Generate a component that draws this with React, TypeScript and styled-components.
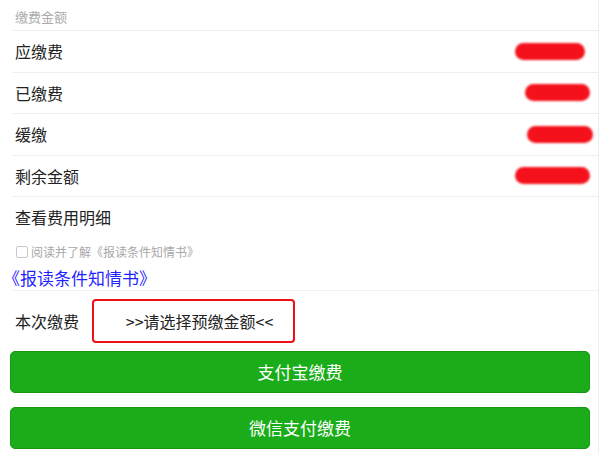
import styled, { createGlobalStyle } from "styled-components";

const GlobalStyle = createGlobalStyle`
  body {
    margin: 0;
    background: #ffffff;
    font-family: "Noto Sans CJK SC", "Liberation Sans", sans-serif;
  }
`;

const Page = styled.div`
  width: 598px;
  height: 453px;
  border-right: 1px solid #ececec;
  background: #ffffff;
  overflow: hidden;
`;

const SectionTitle = styled.div`
  height: 30px;
  padding: 8px 0 0 15px;
  box-sizing: border-box;
  font-size: 13px;
  line-height: 18px;
  color: #aaaaaa;
`;

const Cell = styled.div`
  margin-left: 12px;
  padding-left: 3px;
  padding-right: 8px;
  height: 41.5px;
  box-sizing: border-box;
  border-top: 1px solid #eeeeee;
  display: flex;
  align-items: center;
  justify-content: space-between;
  font-size: 16px;
  color: #222222;
`;

const Redacted = styled.span<{ $w: number; $shift: number }>`
  display: inline-block;
  width: ${(p) => p.$w}px;
  height: 17px;
  margin-right: ${(p) => p.$shift}px;
  background: #f5111b;
  border-radius: 9px;
  filter: blur(0.8px);
`;

const AgreeRow = styled.label`
  display: flex;
  align-items: center;
  gap: 3px;
  height: 28px;
  padding-left: 16px;
  font-size: 12px;
  color: #a8a8a8;
`;

const CheckBox = styled.span`
  width: 10px;
  height: 10px;
  border: 1px solid #c8c8c8;
  border-radius: 2px;
  background: #ffffff;
`;

const LinkRow = styled.div`
  height: 24px;
  padding-left: 3px;
  display: flex;
  align-items: center;
  font-size: 17px;
  color: #1f1fff;
`;

const PayRow = styled.div`
  margin-left: 12px;
  padding-left: 3px;
  height: 61px;
  box-sizing: border-box;
  border-top: 1px solid #f0f0f0;
  display: flex;
  align-items: center;
  gap: 13px;
  font-size: 16px;
  color: #222222;
`;

const AmountBox = styled.div`
  width: 203px;
  height: 44px;
  box-sizing: border-box;
  padding-left: 12px;
  border: 2px solid #f00f16;
  border-radius: 4px;
  display: flex;
  align-items: center;
  justify-content: center;
  font-size: 16px;
  color: #222222;
`;

const Buttons = styled.div`
  display: flex;
  flex-direction: column;
  gap: 14px;
  padding: 0 10px;
`;

const PayButton = styled.button`
  width: 580px;
  height: 42px;
  border: 1px solid #179b16;
  border-radius: 5px;
  background: #1aad19;
  color: #ffffff;
  font-family: inherit;
  font-size: 17px;
  cursor: pointer;
`;

const rows = [
  { label: "应缴费", w: 70, shift: 5 },
  { label: "已缴费", w: 65, shift: 0 },
  { label: "缓缴", w: 66, shift: -3 },
  { label: "剩余金额", w: 75, shift: 0 },
];

const App = () => {
  return (
    <Page>
      <GlobalStyle />
      <SectionTitle>缴费金额</SectionTitle>
      {rows.map((row) => (
        <Cell key={row.label}>
          <span>{row.label}</span>
          <Redacted $w={row.w} $shift={row.shift} />
        </Cell>
      ))}
      <Cell>
        <span>查看费用明细</span>
      </Cell>
      <AgreeRow>
        <CheckBox />
        阅读并了解《报读条件知情书》
      </AgreeRow>
      <LinkRow>《报读条件知情书》</LinkRow>
      <PayRow>
        <span>本次缴费</span>
        <AmountBox>&gt;&gt;请选择预缴金额&lt;&lt;</AmountBox>
      </PayRow>
      <Buttons>
        <PayButton>支付宝缴费</PayButton>
        <PayButton>微信支付缴费</PayButton>
      </Buttons>
    </Page>
  );
};

export default App;
